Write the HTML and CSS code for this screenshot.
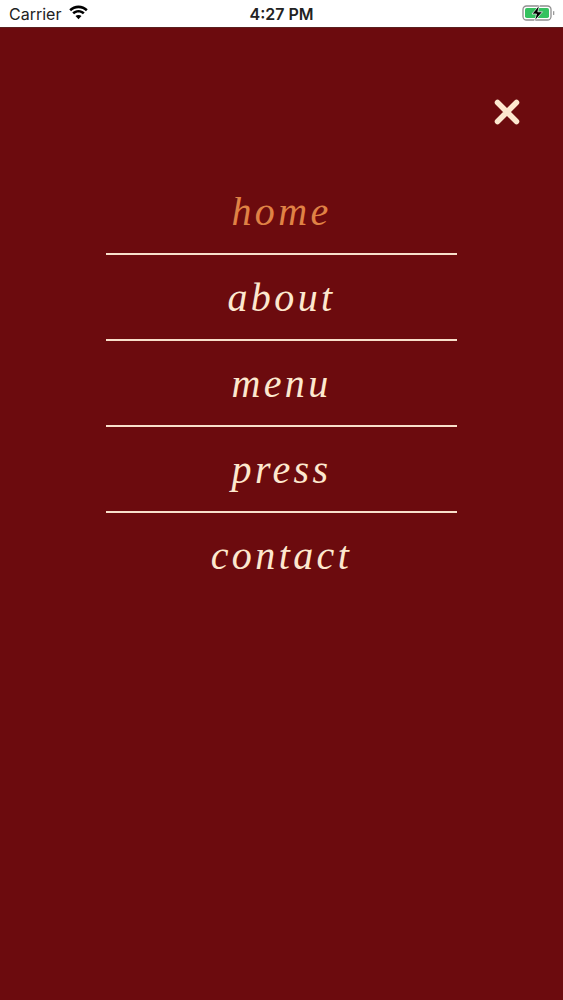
FILE: index.html
```html
<!DOCTYPE html>
<html lang="en">
<head>
<meta charset="utf-8">
<title>Menu</title>
<link rel="stylesheet" href="styles.css">
</head>
<body>
<header class="status">
  <div class="status-left">
    <span>Carrier</span>
    <svg class="wifi" width="21" height="15" viewBox="0 0 21 15"><path d="M10.5 3.2c2.9 0 5.5 1.100 7.500 3l1.700-1.900C17.300 2 14 .6 10.500.6S3.700 2 1.300 4.300L3 6.200c2-1.900 4.600-3 7.500-3z"/><path d="M10.500 7.600c1.700 0 3.200.6 4.400 1.700l1.800-1.900c-1.600-1.600-3.800-2.500-6.200-2.500S5.900 5.800 4.300 7.400l1.800 1.900c1.200-1.100 2.700-1.700 4.400-1.700z"/><path d="M10.500 14.200l3-3.200c-.8-.7-1.800-1.100-3-1.100s-2.200.4-3 1.100z"/></svg>
  </div>
  <div class="status-time">4:27 PM</div>
  <div class="status-right">
    <svg class="battery" width="33" height="18" viewBox="0 0 33 18">
      <rect x="1" y="2" width="28" height="14" rx="3.500" fill="none" stroke="#8f8f8f" stroke-width="1.300"/>
      <rect x="3" y="4" width="24" height="10" rx="1.800" fill="#34c25f"/>
      <rect x="31" y="7" width="1.300" height="4" rx=".6" fill="#9a9a9a"/>
      <path d="M17.500 1 L10 10 H14.500 L12.500 17 L20.500 7.800 H15.800 Z" fill="#000" stroke="#fff" stroke-width=".7"/>
    </svg>
  </div>
</header>
<main class="screen">
  <div class="close-row">
    <svg class="close" width="28" height="28" viewBox="0 0 28 28"><path d="M4.500 4.500 L23.500 23.500 M23.500 4.500 L4.500 23.500" stroke="#fde8cf" stroke-width="5.500" stroke-linecap="round"/></svg>
  </div>
  <nav class="menu">
    <a class="item active">home</a>
    <a class="item">about</a>
    <a class="item">menu</a>
    <a class="item">press</a>
    <a class="item last">contact</a>
  </nav>
</main>
</body>
</html>
```
FILE: styles.css
```css
html, body { margin: 0; padding: 0; }
body { width: 563px; height: 1000px; overflow: hidden; background: #6c0b0e; display: flex; flex-direction: column; }
.status { height: 27px; flex: none; background: #fff; border-bottom: 1px solid #5a2020; display: grid; grid-template-columns: 1fr auto 1fr; align-items: center; padding: 0 9px; font-family: Inter, "Liberation Sans", Arial, sans-serif; font-size: 16px; color: #222; }
.status-left { display: flex; align-items: center; gap: 7px; }
.wifi { margin-top: -3px; }
.status-time { font-weight: 600; font-size: 16px; color: #222; }
.status-right { display: flex; justify-content: flex-end; }
.battery { margin-right: -1px; margin-top: -1px; }
.screen { flex: 1; display: flex; flex-direction: column; align-items: center; }
.close-row { align-self: stretch; display: flex; justify-content: flex-end; padding: 70px 42px 0 0; }
.menu { width: 351px; margin-top: 42px; display: flex; flex-direction: column; }
.item { height: 84px; padding-top: 1px; margin-bottom: -1px; border-bottom: 2px solid #f8dfca; display: flex; align-items: center; justify-content: center; font-family: "Liberation Serif", "Times New Roman", serif; font-style: italic; font-size: 40px; letter-spacing: 3.400px; color: #fde8cf; }
.item.active { color: #e08245; }
.item.last { border-bottom: 0; }
```
